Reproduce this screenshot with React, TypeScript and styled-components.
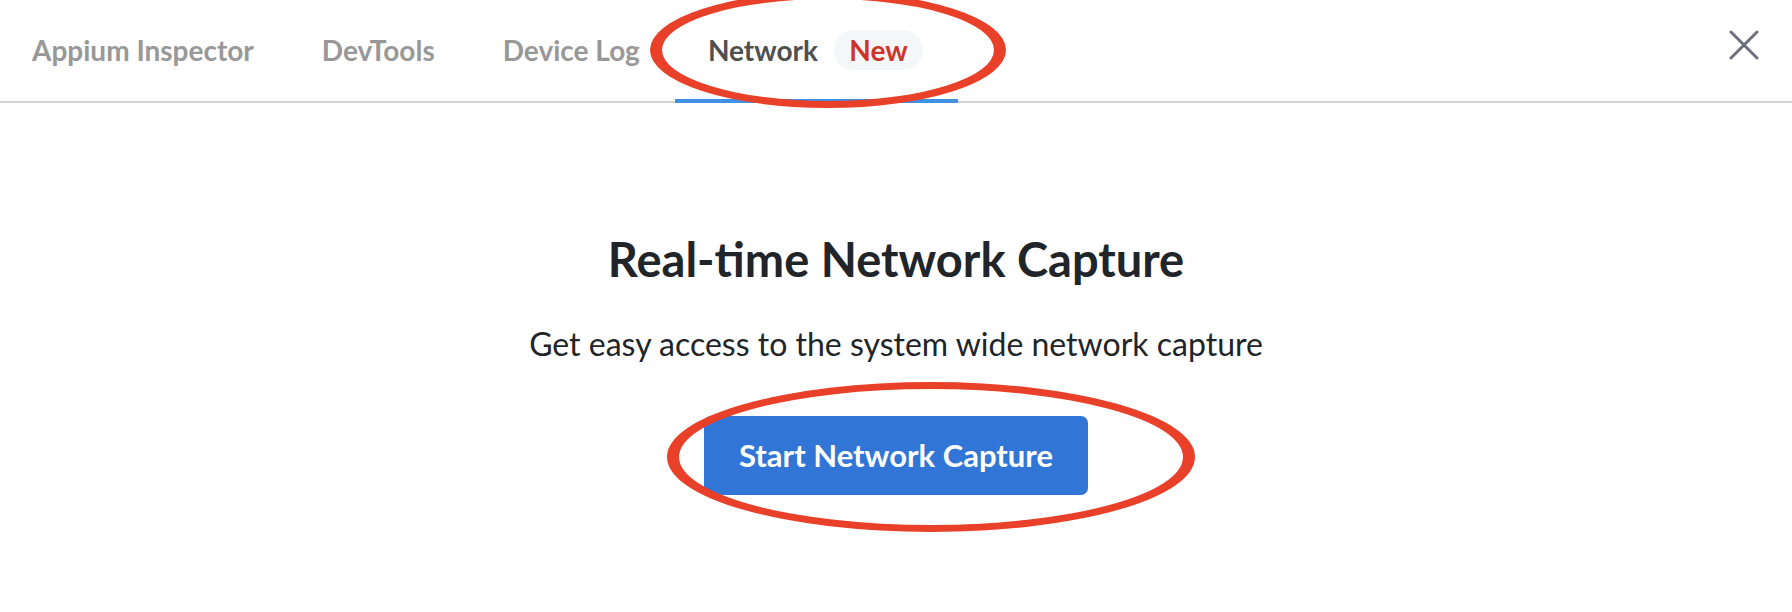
import React from 'react';
import styled, { createGlobalStyle } from 'styled-components';

const GlobalStyle = createGlobalStyle`
    html, body {
        margin: 0;
        padding: 0;
        background: #ffffff;
    }
    body {
        font-family: Lato, "Open Sans", sans-serif;
        width: 1792px;
        height: 612px;
        overflow: hidden;
    }
`;

const Page = styled.div`
    position: relative;
    width: 1792px;
    height: 612px;
    background: #fff;
`;

const Header = styled.div`
    display: flex;
    flex-direction: row;
    align-items: stretch;
    justify-content: space-between;
    height: 101px;
    border-bottom: 2px solid #d4d4d4;
    padding: 0 33px 0 0;
`;

const TabList = styled.div`
    display: flex;
    flex-direction: row;
    align-items: stretch;
    margin-left: -1px;
`;

const Tab = styled.div<{ $active?: boolean }>`
    position: relative;
    display: flex;
    align-items: center;
    gap: 16px;
    padding: 0 35px 2px 33px;
    font-size: 28px;
    font-weight: 700;
    color: ${(p) => (p.$active ? '#505050' : '#989898')};

    &::after {
        content: '';
        display: ${(p) => (p.$active ? 'block' : 'none')};
        position: absolute;
        left: 0;
        right: 0;
        bottom: -2px;
        height: 4px;
        background: #4191e3;
    }
`;

const Badge = styled.span`
    display: inline-flex;
    align-items: center;
    justify-content: center;
    width: 89px;
    height: 40px;
    border-radius: 20px;
    background: #f4f6f8;
    color: #cf3429;
`;

const CloseButton = styled.button`
    align-self: flex-start;
    margin-top: 30px;
    width: 30px;
    height: 30px;
    padding: 0;
    border: none;
    background: transparent;
    cursor: pointer;
`;

const Content = styled.div`
    display: flex;
    flex-direction: column;
    align-items: center;
    padding-top: 128px;
`;

const Title = styled.h1`
    margin: 0;
    font-size: 47px;
    font-weight: 700;
    color: #212529;
    line-height: 1.2;
`;

const Subtitle = styled.p`
    margin: 38px 0 0;
    font-size: 32px;
    font-weight: 400;
    color: #212529;
    line-height: 1.2;
`;

const PrimaryButton = styled.button`
    margin-top: 52px;
    width: 384px;
    height: 79px;
    border: none;
    border-radius: 7px;
    background: #3176d7;
    color: #ffffff;
    font-family: Lato, "Open Sans", sans-serif;
    font-size: 31px;
    font-weight: 700;
    cursor: pointer;
`;

const Annotations = styled.svg`
    position: absolute;
    top: 0;
    left: 0;
    pointer-events: none;
`;

// red hand-drawn rings; thicker on the sides than top and bottom
const ring = (cx: number, cy: number, rx: number, ry: number, tx: number, ty: number) => {
    const irx = rx - tx;
    const iry = ry - ty;
    return (
        `M ${cx - rx} ${cy} a ${rx} ${ry} 0 1 0 ${rx * 2} 0 a ${rx} ${ry} 0 1 0 ${-rx * 2} 0 Z ` +
        `M ${cx - irx} ${cy} a ${irx} ${iry} 0 1 0 ${irx * 2} 0 a ${irx} ${iry} 0 1 0 ${-irx * 2} 0 Z`
    );
};

export default function App() {
    return (
        <Page>
            <GlobalStyle />
            <Header>
                <TabList>
                    <Tab>Appium Inspector</Tab>
                    <Tab>DevTools</Tab>
                    <Tab>Device Log</Tab>
                    <Tab $active>
                        Network
                        <Badge>New</Badge>
                    </Tab>
                </TabList>
                <CloseButton aria-label="Close">
                    <svg width="30" height="30" viewBox="0 0 30 30">
                        <path
                            d="M2 2 L28 28 M28 2 L2 28"
                            stroke="#6b717c"
                            strokeWidth="3"
                            strokeLinecap="round"
                        />
                    </svg>
                </CloseButton>
            </Header>
            <Content>
                <Title>Real-time Network Capture</Title>
                <Subtitle>Get easy access to the system wide network capture</Subtitle>
                <PrimaryButton>Start Network Capture</PrimaryButton>
            </Content>
            <Annotations width="1792" height="612" viewBox="0 0 1792 612">
                <path d={ring(828, 50, 178, 58, 12, 7)} fill="#e9402a" fillRule="evenodd" />
                <path d={ring(931, 457, 264, 75, 12, 7)} fill="#e9402a" fillRule="evenodd" />
            </Annotations>
        </Page>
    );
}
